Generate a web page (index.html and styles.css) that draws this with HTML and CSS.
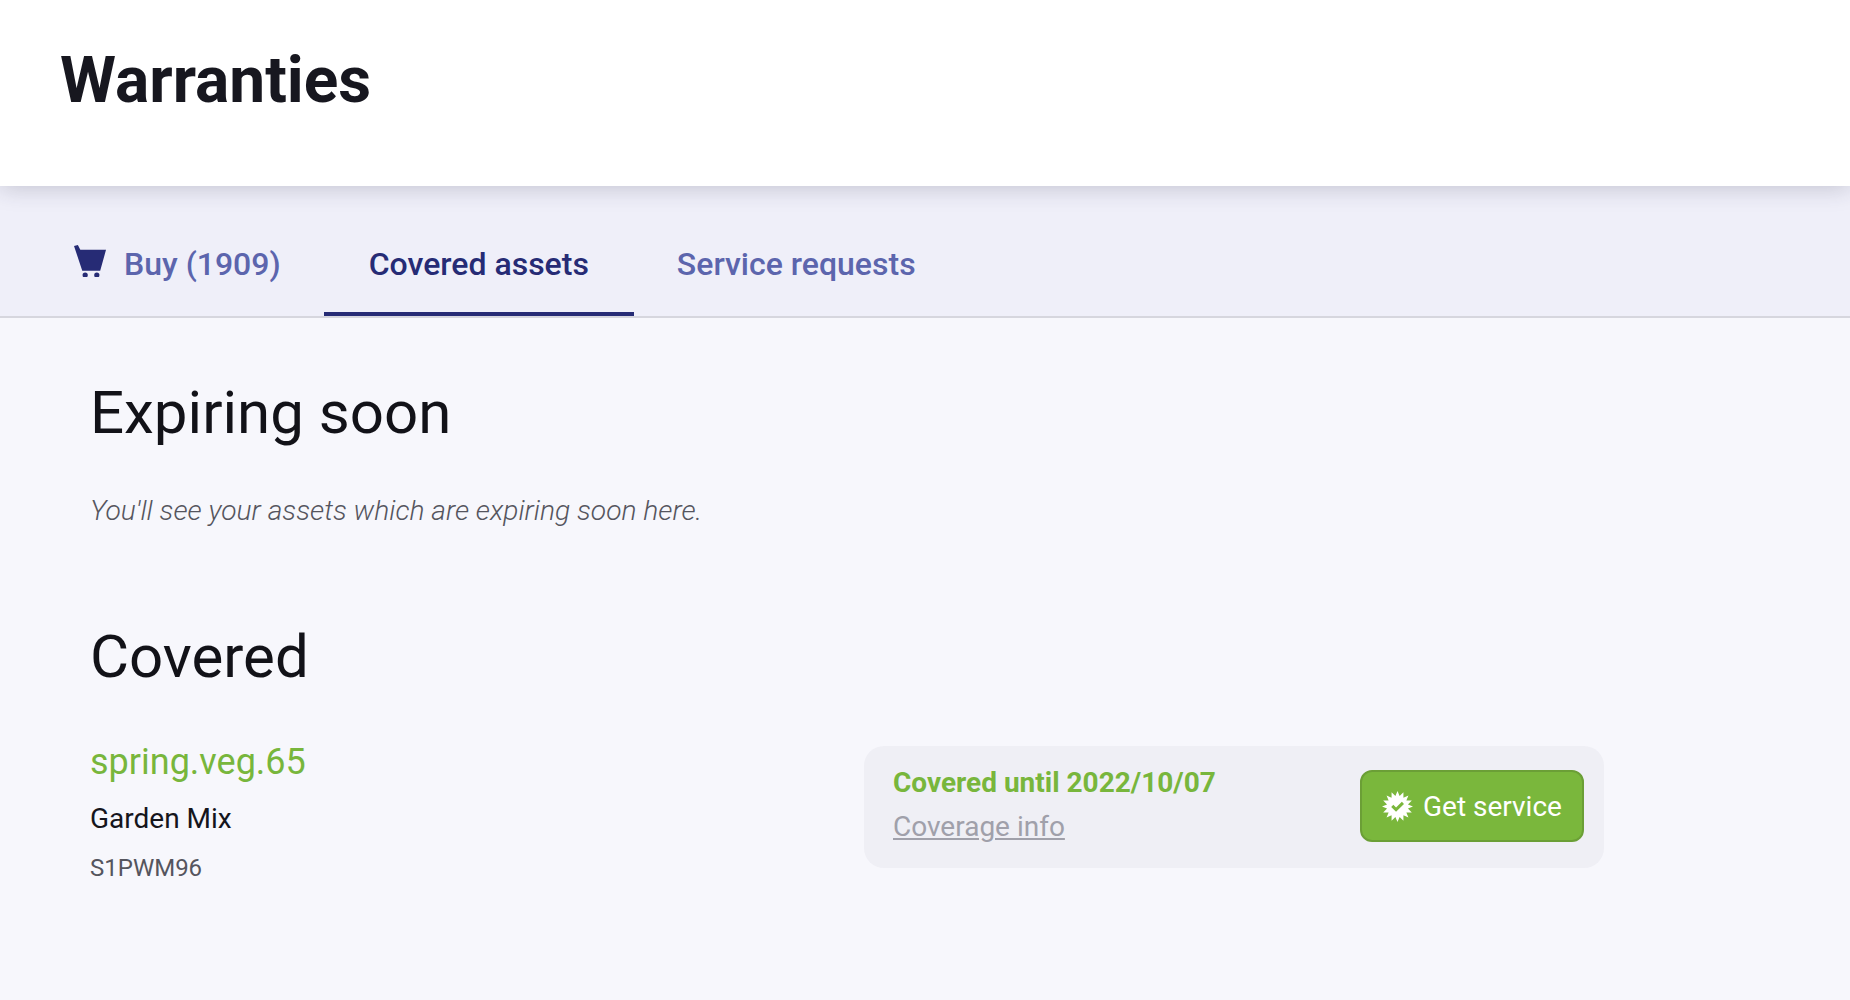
FILE: index.html
```html
<!DOCTYPE html>
<html lang="en">
<head>
<meta charset="utf-8">
<title>Warranties</title>
<link rel="stylesheet" href="styles.css">
</head>
<body>
<header class="page-header"><h1 class="page-title">Warranties</h1></header>
<nav class="tabs">
  <a class="tab tab-buy">
    <svg class="cart" viewBox="0 0 34 33" aria-hidden="true"><path d="M0 1 L4 0 L6.5 5 L33 5 L27 26.500 L8.500 26.500 Z" fill="#262b75"/><circle cx="11.500" cy="31" r="2.700" fill="#262b75"/><circle cx="23.500" cy="31" r="2.700" fill="#262b75"/></svg>
    <span>Buy (1909)</span>
  </a>
  <a class="tab tab-active">Covered assets</a>
  <a class="tab tab-service">Service requests</a>
</nav>
<main class="content">
  <h2 class="section-title">Expiring soon</h2>
  <p class="empty-note">You'll see your assets which are expiring soon here.</p>
  <h2 class="section-title section-covered">Covered</h2>
  <div class="asset">
    <div class="asset-info">
      <a class="asset-name">spring.veg.65</a>
      <div class="asset-model">Garden Mix</div>
      <div class="asset-serial">S1PWM96</div>
    </div>
    <div class="coverage">
      <div class="coverage-text">
        <div class="coverage-until">Covered until 2022/10/07</div>
        <a class="coverage-link">Coverage info</a>
      </div>
      <button class="service-btn" type="button">
        <svg class="badge" viewBox="0 0 32 32" aria-hidden="true"><path fill="#fff" fill-rule="evenodd" d="M16 0L18.15 5.21 22.12 1.22 22.11 6.85 27.31 4.69 25.15 9.89 30.78 9.88 26.79 13.85 32 16 26.79 18.15 30.78 22.12 25.15 22.11 27.31 27.31 22.11 25.15 22.12 30.78 18.15 26.79 16 32 13.85 26.79 9.88 30.78 9.89 25.15 4.69 27.31 6.85 22.11 1.22 22.12 5.21 18.15 0 16 5.21 13.85 1.22 9.88 6.85 9.89 4.69 4.69 9.89 6.85 9.88 1.22 13.85 5.21ZM9.500 16.500L11.700 14.300 14.500 17.100 20.500 11.100 22.700 13.300 14.500 21.500Z"/></svg>
        <span class="service-label">Get service</span>
      </button>
    </div>
  </div>
</main>
</body>
</html>
```
FILE: styles.css
```css
* { box-sizing: border-box; }
html, body { margin: 0; height: 1000px; overflow: hidden; }
body {
  background: #f7f7fc;
  font-family: Roboto, "Liberation Sans", sans-serif;
  color: #15151c;
}
.page-header {
  position: relative;
  z-index: 1;
  height: 186px;
  padding: 45px 60px 0;
  background: #fff;
  box-shadow: 0 2px 22px rgba(40, 40, 70, 0.22);
}
.page-title {
  margin: 0;
  font-size: 64px;
  line-height: 72px;
  font-weight: 700;
  color: #17171f;
}
.tabs {
  display: flex;
  height: 132px;
  padding-left: 74px;
  background: #efeff9;
  border-bottom: 2px solid #d6d6de;
}
.tab {
  display: flex;
  align-items: center;
  gap: 17px;
  height: 130px;
  padding: 30px 44px 0;
  font-size: 32px;
  font-weight: 500;
  color: #5c65ad;
  border-bottom: 4px solid transparent;
}
.tab-buy { padding-left: 0; padding-right: 43px; }
.tab-active { padding: 30px 45px 0; color: #262b75; border-bottom-color: #262b75; }
.tab-service { padding-left: 43px; }
.cart { width: 33px; height: 32px; margin-top: -6px; }
.content { padding: 0 0 0 90px; }
.section-title {
  margin: 0;
  padding-top: 60px;
  font-size: 60px;
  line-height: 70px;
  font-weight: 400;
  color: #121218;
}
.empty-note {
  margin: 45px 0 0;
  font-size: 28.200px;
  line-height: 36px;
  font-style: italic;
  font-weight: 300;
  color: #55555e;
}
.section-covered { padding-top: 93px; }
.asset { display: flex; margin-top: 48px; }
.asset-info { width: 774px; }
.asset-name {
  display: block;
  font-size: 36px;
  line-height: 44px;
  color: #78b63c;
}
.asset-model {
  margin-top: 18px;
  font-size: 28px;
  line-height: 34px;
  color: #15151c;
}
.asset-serial {
  margin-top: 17px;
  font-size: 24px;
  line-height: 30px;
  color: #55555e;
}
.coverage {
  display: flex;
  align-items: center;
  justify-content: space-between;
  width: 740px;
  height: 122px;
  margin-top: 6px;
  padding: 0 20px 0 29px;
  background: #efeff5;
  border-radius: 20px;
}
.coverage-text { margin-top: -4px; }
.coverage-until {
  font-size: 28px;
  line-height: 36px;
  font-weight: 700;
  color: #78b63c;
}
.coverage-link {
  display: block;
  margin-top: 8px;
  font-size: 28px;
  line-height: 36px;
  color: #a0a0aa;
  text-decoration: underline;
}
.service-btn {
  display: flex;
  align-items: center;
  gap: 10px;
  width: 224px;
  height: 72px;
  margin-top: -2px;
  padding: 0 0 0 20px;
  font: 400 28px/1 Roboto, "Liberation Sans", sans-serif;
  color: #fff;
  background: #7ab73c;
  border: 2px solid #6b9f36;
  border-radius: 12px;
}
.service-label { margin-top: 2px; }
.badge { width: 31px; height: 31px; flex: none; }
```
